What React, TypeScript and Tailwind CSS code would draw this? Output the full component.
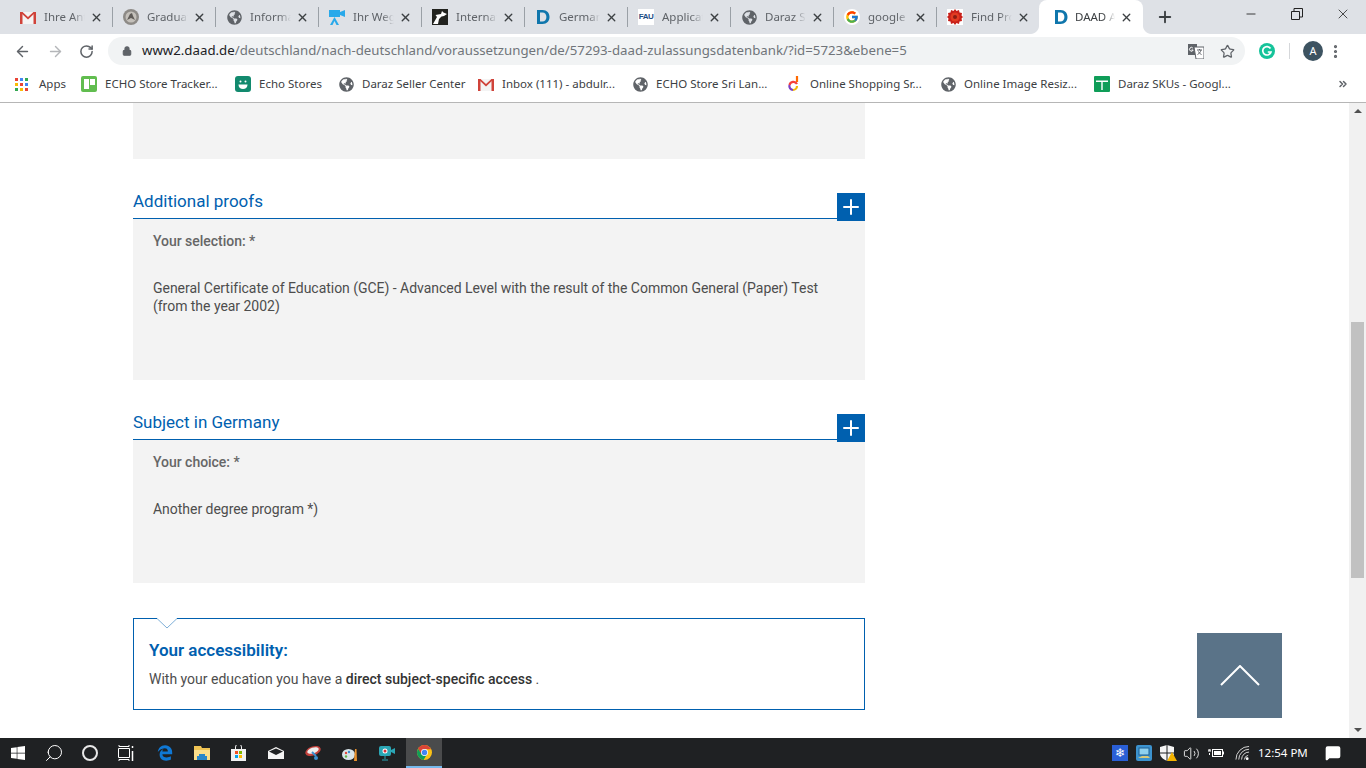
import type { ReactNode } from "react"
import { ArrowLeft, ArrowRight, RotateCw, Star, X, Plus, Minus, Search, MoreVertical, Lock, Volume2, MessageSquare, ChevronsRight } from "lucide-react"
import { FaGlobeAmericas, FaWindows, FaEdgeLegacy } from "react-icons/fa"
import { FcGoogle } from "react-icons/fc"

const ui = "font-['Noto_Sans','Open_Sans',sans-serif]"

function Globe() {
  return <FaGlobeAmericas className="h-[15px] w-[15px] text-[#5f6368]" />
}

function Gmail() {
  return (
    <svg viewBox="0 0 16 13" className="h-[13px] w-4">
      <path d="M0 1h16v12H0z" fill="#f4f4f4" />
      <path d="M0 1h2.500v12H0zM13.500 1H16v12h-2.500z" fill="#d0433a" />
      <path d="M0 1h2.500L8 6l5.500-5H16L8 8.500z" fill="#d0433a" />
    </svg>
  )
}

function DaadD() {
  return (
    <svg viewBox="0 0 16 16" className="h-4 w-4">
      <path d="M2 1h5.500c4.500 0 7 3 7 7s-2.500 7-7 7H2zm3 2.500v9h2.300c2.700 0 4.100-2 4.100-4.500S10 3.500 7.300 3.500z" fill="#0f76ac" />
    </svg>
  )
}

function Fau() {
  return (
    <div className="flex h-4 w-4 items-center justify-center bg-white font-['Liberation_Sans',sans-serif] text-[8px] font-bold leading-none tracking-[-0.5px] text-[#1f4e86]">
      FAU
    </div>
  )
}

function Flower() {
  return (
    <svg viewBox="0 0 16 16" className="h-4 w-4">
      <rect width="16" height="16" fill="#fff" />
      <path d="M8 0l1.500 2L12 1l.5 2.500L15 4l-.5 2.500L16 8l-1.500 1.500L15 12l-2.500.5L12 15l-2.500-1L8 16l-1.500-2L4 15l-.5-2.500L1 12l.5-2.500L0 8l1.500-1.500L1 4l2.500-.5L4 1l2.500 1z" fill="#c8201a" />
      <circle cx="8" cy="8" r="4.500" fill="#e23b22" />
      <circle cx="8" cy="8" r="2" fill="#8c1c12" />
    </svg>
  )
}

function Camera() {
  return (
    <svg viewBox="0 0 16 16" className="h-4 w-4">
      <path d="M0 1h11v7H0zM11 3l5-2v7l-5-2z" fill="#29a9ea" />
      <path d="M5.500 8 1 16h2.500l2-4 2 4H10z" fill="#29a9ea" />
    </svg>
  )
}

function Wolf() {
  return (
    <svg viewBox="0 0 16 16" className="h-4 w-4">
      <rect width="16" height="16" fill="#22231f" />
      <path d="M1 15 5 8 3.500 6 9 5l1-3 1.500 1.500L15 5l-3 2-2.500.5L7 10l-1 5z" fill="#fff" />
    </svg>
  )
}

function Owl() {
  return (
    <svg viewBox="0 0 16 16" className="h-4 w-4">
      <circle cx="8" cy="8" r="8" fill="#8d8a86" />
      <circle cx="8" cy="8" r="5.500" fill="#c4c0ba" />
      <path d="M4 11 7 5l2-1 1 3 2 4-4-2z" fill="#5f5b57" />
    </svg>
  )
}

function TabG() {
  return (
    <div className="flex h-4 w-4 items-center justify-center rounded-full bg-white">
      <FcGoogle className="h-[14px] w-[14px]" />
    </div>
  )
}

const tabs: { title: string; icon: ReactNode }[] = [
  { title: "Ihre Antwort", icon: <Gmail /> },
  { title: "Graduate", icon: <Owl /> },
  { title: "Information", icon: <Globe /> },
  { title: "Ihr Weg", icon: <Camera /> },
  { title: "International", icon: <Wolf /> },
  { title: "German", icon: <DaadD /> },
  { title: "Application", icon: <Fau /> },
  { title: "Daraz Seller", icon: <Globe /> },
  { title: "google", icon: <TabG /> },
  { title: "Find Products", icon: <Flower /> },
]

function Tab({ title, icon }: { title: string; icon: ReactNode }) {
  return (
    <div className="relative flex h-[34px] w-[103px] shrink-0 items-center pl-[10px]">
      <div className="flex w-4 shrink-0 justify-center">{icon}</div>
      <span className="ml-2 -mt-px w-[41px] overflow-hidden whitespace-nowrap text-[11.5px] text-[#5f6368] [mask-image:linear-gradient(to_right,black_70%,transparent)]">
        {title}
      </span>
      <X className="ml-[5px] h-[13px] w-[13px] shrink-0 text-[#3c4043]" strokeWidth={2.5} />
      <div className="absolute right-0 top-[7px] h-5 w-px bg-[#9aa0a6]" />
    </div>
  )
}

function ActiveTab() {
  return (
    <div className="relative -ml-px flex h-[34px] w-[104px] shrink-0 items-center rounded-t-lg bg-white pl-[14px]">
      <div className="flex w-4 shrink-0 justify-center"><DaadD /></div>
      <span className="ml-[6px] -mt-px w-[40px] overflow-hidden whitespace-nowrap text-[11.5px] text-[#3c4043] [mask-image:linear-gradient(to_right,black_70%,transparent)]">
        DAAD Admission
      </span>
      <X className="ml-[5px] h-[13px] w-[13px] shrink-0 text-[#3c4043]" strokeWidth={2.5} />
      <svg viewBox="0 0 8 8" className="absolute -left-2 bottom-0 h-2 w-2"><path d="M8 0v8H0c4 0 8-4 8-8z" fill="#fff" /></svg>
      <svg viewBox="0 0 8 8" className="absolute -right-2 bottom-0 h-2 w-2"><path d="M0 0v8h8C4 8 0 4 0 0z" fill="#fff" /></svg>
    </div>
  )
}

function TabStrip() {
  return (
    <div className="flex h-[34px] shrink-0 items-start bg-[#dee1e6] pl-[10px]">
      {tabs.map((t) => <Tab key={t.title} title={t.title} icon={t.icon} />)}
      <ActiveTab />
      <Plus className="ml-[13px] mt-[8px] h-[18px] w-[18px] text-[#3c4043]" strokeWidth={2.5} />
      <div className="ml-[70px] flex h-[28px] items-center">
        <Minus className="h-[14px] w-[14px] text-[#222]" strokeWidth={1.5} />
        <svg viewBox="0 0 12 12" className="ml-[33px] h-3 w-3 text-[#222]" fill="none" stroke="currentColor">
          <path d="M.5 3.500h8v8h-8zM3 3.500V.5h8.500V9H8.500" />
        </svg>
        <X className="ml-[32px] h-[16px] w-[16px] text-[#222]" strokeWidth={1.2} />
      </div>
    </div>
  )
}

function GrammarlyDot() {
  return (
    <div className="flex h-4 w-4 items-center justify-center rounded-full bg-[#15c39a]">
      <svg viewBox="0 0 12 12" className="h-3 w-3" fill="none" stroke="#fff" strokeWidth="1.700">
        <path d="M9.500 3.500A4.200 4.200 0 1 0 10 7H6.800" />
      </svg>
    </div>
  )
}

function TranslateIcon() {
  return (
    <svg viewBox="0 0 16 16" className="h-4 w-4">
      <path d="M0 1h9v11H0z" fill="#5f6368" />
      <path d="M6 4h10v12H8z" fill="#fff" stroke="#5f6368" />
      <path d="M4.800 5a1.900 1.900 0 1 0 .4 2H3.500" stroke="#fff" fill="none" />
      <path d="M9 7h5M11.500 6v1M13 7c-.5 2-2 4-3.500 4.500M10.500 8.500c.5 1.200 1.500 2.300 3 3" stroke="#5f6368" fill="none" />
    </svg>
  )
}

function Toolbar() {
  return (
    <div className="flex h-[34px] shrink-0 items-center bg-white">
      <ArrowLeft className="ml-[14px] h-[17px] w-[17px] text-[#5f6368]" strokeWidth={2} />
      <ArrowRight className="ml-[16px] h-[17px] w-[17px] text-[#b4b6b9]" strokeWidth={2} />
      <RotateCw className="ml-[15px] h-[15px] w-[15px] text-[#5f6368]" strokeWidth={2.4} />
      <div className="ml-[14px] flex h-[28px] w-[1137px] items-center rounded-full bg-[#f1f3f4]">
        <Lock className="ml-[14px] h-[10px] w-[10px] text-[#5f6368]" fill="#5f6368" strokeWidth={2.5} />
        <span className="ml-[10px] whitespace-nowrap text-[13.25px] text-[#70757a]">
          <span className="text-[#202124]">www2.daad.de</span>/deutschland/nach-deutschland/voraussetzungen/de/57293-daad-zulassungsdatenbank/?id=5723&amp;ebene=5
        </span>
        <div className="flex-1" />
        <TranslateIcon />
        <Star className="ml-[16px] mr-[10px] h-[15px] w-[15px] text-[#5f6368]" strokeWidth={2} />
      </div>
      <div className="ml-[14px]"><GrammarlyDot /></div>
      <div className="ml-[14px] h-[16px] w-px bg-[#d5d7da]" />
      <div className="ml-[13px] flex h-5 w-5 items-center justify-center rounded-full bg-[#3d5361] text-[11px] text-white">A</div>
      <MoreVertical className="ml-[4px] h-[17px] w-[17px] text-[#5f6368]" strokeWidth={2.5} />
    </div>
  )
}

function AppsIcon() {
  const colors = ["#ea4335", "#4285f4", "#34a853", "#fbbc05", "#ea4335", "#4285f4", "#34a853", "#fbbc05", "#ea4335"]
  return (
    <div className="mr-[3px] grid h-[13px] w-[13px] grid-cols-3 gap-[2px]">
      {colors.map((c, i) => <div key={i} style={{ backgroundColor: c }} />)}
    </div>
  )
}

function Trello() {
  return (
    <div className="flex h-4 w-4 gap-px rounded-[2px] bg-[#61bd4f] p-[2.500px]">
      <div className="h-[10px] w-[5px] bg-white" />
      <div className="h-[6px] w-[5px] bg-white" />
    </div>
  )
}

function EchoFace() {
  return (
    <svg viewBox="0 0 16 16" className="h-4 w-4">
      <rect width="16" height="16" rx="3" fill="#128a6e" />
      <circle cx="5.500" cy="5.500" r="1" fill="#fff" />
      <circle cx="10.500" cy="5.500" r="1" fill="#fff" />
      <path d="M3.500 8.500h9c0 3-2 4.500-4.500 4.500s-4.500-1.500-4.500-4.500z" fill="#fff" />
    </svg>
  )
}

function DarazD() {
  return (
    <svg viewBox="0 0 16 16" className="h-4 w-4" fill="none" strokeWidth="2.200">
      <path d="M11 0v6" stroke="#ff6a00" />
      <path d="M11 8a4 4 0 0 0-7.500 1" stroke="#f5413b" />
      <path d="M3.500 9A4 4 0 0 0 7 14" stroke="#7a3fc4" />
      <path d="M7 14a4 4 0 0 0 4-4" stroke="#f2b705" />
    </svg>
  )
}

function SheetIcon() {
  return (
    <svg viewBox="0 0 16 16" className="h-4 w-4">
      <rect width="16" height="16" rx="1" fill="#0f9d58" />
      <path d="M2 4.500h12V6H8.700v8H7.300V6H2z" fill="#fff" />
    </svg>
  )
}

const bookmarks: { label: string; icon: ReactNode; box: string }[] = [
  { label: "Apps", icon: <AppsIcon />, box: "w-[66px]" },
  { label: "ECHO Store Tracker...", icon: <Trello />, box: "w-[154px]" },
  { label: "Echo Stores", icon: <EchoFace />, box: "w-[103px]" },
  { label: "Daraz Seller Center", icon: <Globe />, box: "w-[140px]" },
  { label: "Inbox (111) - abdulr...", icon: <Gmail />, box: "w-[154px]" },
  { label: "ECHO Store Sri Lan...", icon: <Globe />, box: "w-[154px]" },
  { label: "Online Shopping Sr...", icon: <DarazD />, box: "w-[154px]" },
  { label: "Online Image Resiz...", icon: <Globe />, box: "w-[154px]" },
  { label: "Daraz SKUs - Googl...", icon: <SheetIcon />, box: "w-[243px]" },
]

function BookmarksBar() {
  return (
    <div className="flex h-[35px] shrink-0 items-center border-b border-[#b6b6b6] bg-white pb-[2px] pl-[15px]">
      {bookmarks.map((b) => (
        <div key={b.label} className={`flex items-center ${b.box}`}>
          <div className="flex w-4 shrink-0 justify-center">{b.icon}</div>
          <span className="ml-2 whitespace-nowrap text-[11.5px] text-[#3c4043]">{b.label}</span>
        </div>
      ))}
      <ChevronsRight className="h-3 w-3 text-[#5f6368]" strokeWidth={3} />
    </div>
  )
}

function Section({ title, label, children }: { title: string; label: string; children: ReactNode }) {
  return (
    <section className="relative mt-[34px]">
      <h3 className="flex h-[26px] items-center border-b border-[#0060af] pb-[8px] text-[17px] text-[#0060af]">{title}</h3>
      <div className="absolute right-0 top-0 flex h-[28px] w-[28px] items-center justify-center bg-[#0060af]">
        <Plus className="h-6 w-6 text-white" strokeWidth={2} />
      </div>
      <div className="bg-[#f3f3f3] pb-[65px] pl-5 pr-10 pt-[13px] text-sm leading-[18px] tracking-[-0.03px] text-[#4d4d4d]">
        <p className="font-medium text-[#666]">{label}</p>
        <p className="mt-[29px]">{children}</p>
      </div>
    </section>
  )
}

function Scrollbar() {
  return (
    <div className="flex w-[17px] shrink-0 flex-col items-center bg-[#f1f1f1]">
      <div className="mt-[6px] h-0 w-0 border-x-[4px] border-b-[4px] border-x-transparent border-b-[#505050]" />
      <div className="mt-[209px] h-[256px] w-[13px] bg-[#c1c1c1]" />
      <div className="flex-1" />
      <div className="mb-[6px] h-0 w-0 border-x-[4px] border-t-[4px] border-x-transparent border-t-[#505050]" />
    </div>
  )
}

function Page() {
  return (
    <div className="relative flex min-h-0 flex-1 overflow-hidden bg-white font-['Roboto',sans-serif]">
      <div className="flex-1 pl-[133px]">
        <div className="w-[732px]">
          <div className="h-[56px] bg-[#f3f3f3]" />
          <Section title="Additional proofs" label="Your selection: *">
            General Certificate of Education (GCE) - Advanced Level with the result of the Common General (Paper) Test (from the year 2002)
          </Section>
          <Section title="Subject in Germany" label="Your choice: *">
            Another degree program *)
          </Section>
          <div className="relative mt-[35px] h-[92px] border border-[#0060af] pl-[15px] pt-[20px]">
            <svg viewBox="0 0 20 11" className="absolute left-[23px] top-[-1px] h-[11px] w-5">
              <path d="M0 0h20v1L10 10 0 1z" fill="#fff" />
              <path d="M0 .5 10 10 20 .5" fill="none" stroke="#7fafd7" />
            </svg>
            <p className="text-[17px] font-semibold leading-[22px] text-[#0060af]">Your accessibility:</p>
            <p className="mt-[9px] text-sm leading-[18px] text-[#4d4d4d]">
              With your education you have a <span className="font-medium text-[#333]">direct subject-specific access</span> .
            </p>
          </div>
        </div>
      </div>
      <Scrollbar />
      <div className="absolute left-[1197px] top-[530px] flex h-[85px] w-[85px] items-center justify-center bg-[#5a7388]">
        <svg viewBox="0 0 40 21" className="-mt-px h-[21px] w-10" fill="none" stroke="#fff" strokeWidth="2">
          <path d="M1 20 20 1l19 19" />
        </svg>
      </div>
    </div>
  )
}

function TaskItem({ box, children }: { box: string; children: ReactNode }) {
  return <div className={`flex h-full items-center justify-center ${box}`}>{children}</div>
}

function Chrome() {
  return (
    <svg viewBox="0 0 16 16" className="h-[15px] w-[15px]">
      <circle cx="8" cy="8" r="8" fill="#fbc116" />
      <path d="M8 0a8 8 0 0 1 0 0A8 8 0 0 0 1.100 4L4.500 10 8 4.500h6.900A8 8 0 0 0 8 0z" fill="#db4437" />
      <path d="M1.100 4A8 8 0 0 0 7 15.900L10.500 10H5z" fill="#0f9d58" />
      <circle cx="8" cy="8" r="3.700" fill="#fff" />
      <circle cx="8" cy="8" r="2.900" fill="#4285f4" />
    </svg>
  )
}

function Taskbar() {
  return (
    <div className={`flex h-[30px] shrink-0 items-stretch bg-[#1f2123] text-white ${ui}`}>
      <TaskItem box="w-[36px]"><FaWindows className="h-4 w-4" /></TaskItem>
      <TaskItem box="w-[36px]"><Search className="h-[20px] w-[20px] -scale-x-100" strokeWidth={1.2} /></TaskItem>
      <TaskItem box="w-[36px]"><div className="h-4 w-4 rounded-full border-2 border-[#e8e8e8]" /></TaskItem>
      <TaskItem box="w-[36px]">
        <svg viewBox="0 0 16 16" className="h-4 w-4" fill="none" stroke="#fff">
          <path d="M.5 3.500h11v9H.5zM1 0v1.500h10V0M1 16v-1.500h10V16" />
          <path d="M14.500 1v2M14.500 6v10" strokeWidth="1.500" />
        </svg>
      </TaskItem>
      <TaskItem box="ml-[3px] w-[36px]"><FaEdgeLegacy className="h-4 w-4 text-[#0f78d4]" /></TaskItem>
      <TaskItem box="ml-px w-[36px]">
        <svg viewBox="0 0 16 14" className="h-[14px] w-4">
          <path d="M0 0h7l1 2h8v12H0z" fill="#f0c454" />
          <path d="M0 4h16v10H0z" fill="#fbdf8b" />
          <path d="M5 8h6v2h2v4H3v-4h2z" fill="#2a87c9" />
        </svg>
      </TaskItem>
      <TaskItem box="w-[37px]">
        <svg viewBox="0 0 15 16" className="h-4 w-[15px]">
          <path d="M0 4h15v12H0z" fill="#f1f1f1" />
          <path d="M4.500 4V2a3 3 0 0 1 6 0v2" fill="none" stroke="#f1f1f1" />
          <path d="M4 6h3v3H4z" fill="#f25022" />
          <path d="M8 6h3v3H8z" fill="#7fba00" />
          <path d="M4 10h3v3H4z" fill="#00a4ef" />
          <path d="M8 10h3v3H8z" fill="#ffb900" />
        </svg>
      </TaskItem>
      <TaskItem box="ml-px w-[36px]">
        <svg viewBox="0 0 16 12" className="h-3 w-4">
          <path d="M0 4 8 0l8 4v8H0z" fill="#f4f4f4" />
          <path d="M1 4.500 8 8l7-3.500-7-3z" fill="#1f2123" />
        </svg>
      </TaskItem>
      <TaskItem box="ml-px w-[36px]">
        <svg viewBox="0 0 16 16" className="h-4 w-4">
          <ellipse cx="8" cy="6" rx="8" ry="4.500" fill="#c5423d" transform="rotate(-20 8 6)" />
          <ellipse cx="8" cy="5.500" rx="6" ry="2.800" fill="#eee" transform="rotate(-20 8 5.500)" />
          <path d="M7 7l4 4" stroke="#3b8ed0" strokeWidth="2" />
          <circle cx="11" cy="13" r="2" fill="#3b8ed0" />
        </svg>
      </TaskItem>
      <TaskItem box="ml-px w-[36px]">
        <svg viewBox="0 0 16 16" className="h-4 w-4">
          <ellipse cx="6.500" cy="9.500" rx="6.500" ry="5.500" fill="#d8e4ea" />
          <circle cx="4" cy="8" r="1.200" fill="#e2483d" />
          <circle cx="7" cy="7" r="1.200" fill="#3b8ed0" />
          <circle cx="4" cy="11.500" r="1.200" fill="#5fb548" />
          <path d="M12 16l1-12 1.500 0 .5 12z" fill="#e8912d" />
        </svg>
      </TaskItem>
      <TaskItem box="ml-px w-[36px]">
        <svg viewBox="0 0 16 16" className="h-4 w-4">
          <rect y="1" width="12" height="10" rx="2" fill="#2ba6b5" />
          <path d="M12 5l4-2v6l-4-2z" fill="#2ba6b5" />
          <circle cx="6" cy="6" r="2.500" fill="#fff" />
          <circle cx="6" cy="6" r="1.500" fill="#d8303a" />
          <path d="M6 11v3M3 15h6" stroke="#2ba6b5" />
        </svg>
      </TaskItem>
      <TaskItem box="ml-px w-[36px] border-b-2 border-[#76b9ed] bg-[#4a4b4c]"><Chrome /></TaskItem>
      <div className="flex-1" />
      <div className="flex items-center">
        <div className="flex h-4 w-4 items-center justify-center bg-[#2a5fd6] text-[12px] leading-none">❄</div>
        <svg viewBox="0 0 16 16" className="ml-2 h-4 w-4">
          <rect width="16" height="16" rx="2" fill="#3c93cf" />
          <rect x="3" y="3" width="10" height="7" fill="#8fd0ee" stroke="#1d5f93" />
          <path d="M2 13l4-2h6l2 2z" fill="#d9c878" />
        </svg>
        <div className="relative ml-2 h-4 w-[17px]">
          <svg viewBox="0 0 14 16" className="h-4 w-[14px]">
            <path d="M7 0l7 2v6c0 4-3 6-7 8-4-2-7-4-7-8V2z" fill="#f5f5f5" />
            <path d="M7 0v16M0 8h14" stroke="#1f2123" />
          </svg>
          <div className="absolute bottom-0 right-0 h-0 w-0 border-x-[5px] border-b-[9px] border-x-transparent border-b-[#f5b400]" />
        </div>
        <Volume2 className="ml-[6px] h-[17px] w-[17px]" strokeWidth={1.2} />
        <svg viewBox="0 0 16 10" className="ml-2 h-[10px] w-4">
          <path d="M0 3h3M1 1v2M2 1v2M1.500 5v2" stroke="#fff" />
          <rect x="4.500" y="1.500" width="10" height="7" fill="none" stroke="#fff" />
          <rect x="6" y="3" width="7" height="4" fill="#fff" />
          <rect x="15" y="3.500" width="1" height="3" fill="#fff" />
        </svg>
        <svg viewBox="0 0 16 16" className="ml-[11px] h-4 w-[15px]" fill="none" stroke="#ddd">
          <path d="M1 15A14 14 0 0 1 15 1M4 15A11 11 0 0 1 15 4M7 15a8 8 0 0 1 8-8M10 15a5 5 0 0 1 4-4.500" />
          <circle cx="13" cy="14" r="1.500" fill="#fff" stroke="none" />
        </svg>
        <span className="ml-2 w-[48px] whitespace-nowrap text-[11.5px]">12:54 PM</span>
        <MessageSquare className="ml-[19px] mr-[25px] h-4 w-4" fill="#fff" stroke="#fff" />
      </div>
    </div>
  )
}

export default function App() {
  return (
    <div className={`flex h-screen w-full flex-col overflow-hidden ${ui}`}>
      <TabStrip />
      <Toolbar />
      <BookmarksBar />
      <Page />
      <Taskbar />
    </div>
  )
}
